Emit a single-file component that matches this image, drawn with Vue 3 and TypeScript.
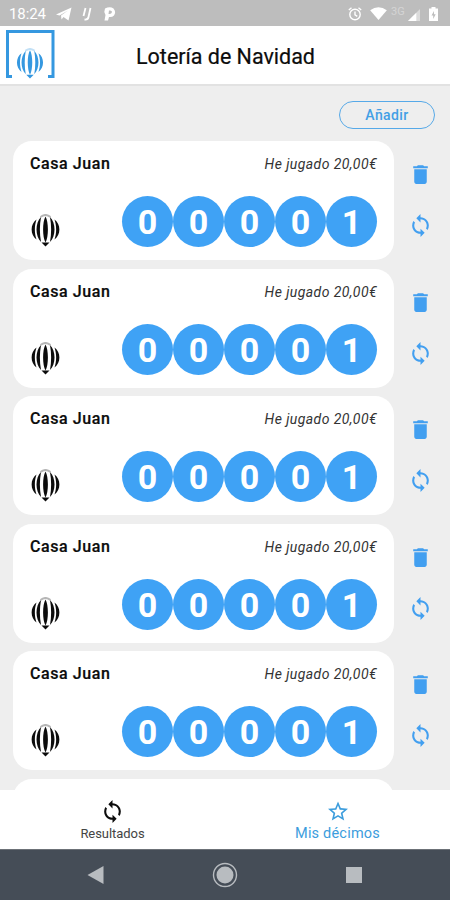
<script setup lang="ts">
interface Ticket {
  id: number
  name: string
  played: string
  digits: string[]
}

const tickets: Ticket[] = Array.from({ length: 5 }, (_, i) => ({
  id: i,
  name: 'Casa Juan',
  played: 'He jugado 20,00€',
  digits: '00001'.split(''),
}))

const loopPath =
  'M12 4V1L8 5l4 4V6c3.31 0 6 2.69 6 6 0 1.01-.25 1.97-.7 2.8l1.46 1.46A7.93 7.93 0 0020 12c0-4.42-3.58-8-8-8zm0 14c-3.31 0-6-2.69-6-6 0-1.01.25-1.97.7-2.8L5.24 7.74A7.93 7.93 0 004 12c0 4.42 3.58 8 8 8v3l4-4-4-4v3z'
const drumPath =
  'M5.500 5.500C-1 10-1 21 5.500 25.500C3.300 19 3.300 12 5.500 5.500ZM10 3C4 9 4 22 10 28C8.500 20 8.500 11 10 3ZM14.500 2.500C11.300 8 11.300 23 14.500 28.500C17.700 23 17.700 8 14.500 2.500ZM19 3C25 9 25 22 19 28C20.500 20 20.500 11 19 3ZM23.500 5.500C30 10 30 21 23.500 25.500C25.700 19 25.700 12 23.500 5.500ZM10.500 28.500H18.500L14.500 32.500Z'
</script>

<template>
  <div class="screen">
    <div class="status">
      <span class="clock">18:24</span>
      <svg class="telegram" viewBox="0 0 16 14"><path d="M0 7.500L15.500.5 12.500 13.500 7.500 10 5.500 12.500 5 8.500 12 3.500 3.500 8.500Z" /></svg>
      <svg class="ij" viewBox="0 0 10 14"><path d="M3.500 1L1.500 9M8.500 1L6.500 10Q6 13 2.500 12.500" /></svg>
      <svg class="pin" viewBox="0 0 12 14"><path fill-rule="evenodd" d="M1 1.500Q6-.8 9.500 1.500Q12.500 5 10 8.500Q8 10.500 5 10L4 13.500H.5L1.500 8L.3 5ZM5 3.500L4.500 7Q7.500 7.500 8 5Q8 3 5 3.500Z" /></svg>
      <span class="spacer"></span>
      <svg class="alarm" viewBox="0 0 14 14"><circle cx="7" cy="7.500" r="5.200" /><path d="M7 4.500V7.800L9.300 9.300M.8 3L3.500.8M13.200 3L10.500.8" /></svg>
      <svg class="wifi" viewBox="0 0 18 14"><path d="M0 3.500Q9-3 18 3.500L9 14Z" /></svg>
      <span class="net">3G</span>
      <svg class="signal" viewBox="0 0 13 13"><path opacity=".45" d="M0 13L13 0V13Z" /><path d="M0 13L9 4V13Z" /></svg>
      <svg class="battery" viewBox="0 0 9 14"><path fill-rule="evenodd" d="M2.500 1.500V0H6.500V1.500H9V14H0V1.500ZM5 4L2.500 8.500H4.200V12L6.700 7.200H5Z" /></svg>
    </div>

    <header class="header">
      <div class="logo">
        <svg class="frame" viewBox="0 0 49 49"><path d="M6 46.500H1.500V1.500H47V46.500H42" /></svg>
        <svg class="logo-drum" viewBox="0 0 29 33"><path :d="drumPath" /><path class="cap" d="M9.500 3Q14.500-1 19.500 3" /></svg>
      </div>
      <h1 class="title">Lotería de Navidad</h1>
    </header>

    <main class="content">
      <div class="toolbar"><button class="add">Añadir</button></div>
      <div class="list">
        <div v-for="t in tickets" :key="t.id" class="row">
          <article class="card">
            <div class="line">
              <span class="name">{{ t.name }}</span>
              <span class="played">{{ t.played }}</span>
            </div>
            <div class="line bottom">
              <svg class="drum" viewBox="0 0 29 33"><path :d="drumPath" /><path class="cap" d="M9.500 3Q14.500-1 19.500 3" /></svg>
              <div class="balls">
                <span v-for="(d, i) in t.digits" :key="i" class="ball">{{ d }}</span>
              </div>
            </div>
          </article>
          <div class="actions">
            <svg viewBox="0 0 24 24"><path d="M6 19c0 1.100.9 2 2 2h8c1.100 0 2-.9 2-2V7H6v12zM19 4h-3.500l-1-1h-5l-1 1H5v2h14V4z" /></svg>
            <svg viewBox="0 0 24 24"><path :d="loopPath" /></svg>
          </div>
        </div>
        <div class="row">
          <article class="card"></article>
        </div>
      </div>
    </main>

    <nav class="tabs">
      <div class="tab">
        <svg viewBox="0 0 24 24"><path :d="loopPath" /></svg>
        <span class="tab-label">Resultados</span>
      </div>
      <div class="tab active">
        <svg viewBox="0 0 24 24"><path d="M22 9.240l-7.190-.62L12 2 9.190 8.630 2 9.240l5.460 4.730L5.820 21 12 17.270 18.180 21l-1.630-7.030L22 9.240zM12 15.400l-3.760 2.270 1-4.280-3.320-2.880 4.380-.38L12 6.100l1.710 4.040 4.380.38-3.320 2.880 1 4.280L12 15.400z" /></svg>
        <span class="tab-label">Mis décimos</span>
      </div>
    </nav>

    <div class="system">
      <svg viewBox="0 0 26 26"><path d="M4.500 13L20.500 4V22Z" /></svg>
      <svg viewBox="0 0 26 26"><circle cx="13" cy="13" r="8.500" /><circle class="ring" cx="13" cy="13" r="11.500" /></svg>
      <svg viewBox="0 0 26 26"><path d="M5 5H21V21H5Z" /></svg>
    </div>
  </div>
</template>

<style>
body {
  margin: 0;
}
</style>

<style scoped>
.screen {
  width: 450px;
  height: 900px;
  display: flex;
  flex-direction: column;
  overflow: hidden;
  background: #eee;
  font-family: Roboto, "Liberation Sans", sans-serif;
  color: #0c0c0c;
}
svg {
  display: block;
  flex: none;
  fill: currentColor;
}
.status {
  flex: none;
  height: 26px;
  box-sizing: border-box;
  padding: 1px 12px 0 9px;
  display: flex;
  align-items: center;
  background: #bdbdbd;
  color: #fff;
}
.clock {
  width: 47px;
  font-size: 15px;
  letter-spacing: -0.1px;
}
.telegram {
  width: 16px;
  height: 14px;
}
.ij {
  width: 10px;
  height: 14px;
  margin-left: 10px;
  fill: none;
  stroke: currentColor;
  stroke-width: 1.8;
}
.pin {
  width: 12px;
  height: 14px;
  margin-left: 12px;
}
.spacer {
  flex: 1;
}
.alarm {
  width: 14px;
  height: 14px;
  fill: none;
  stroke: currentColor;
  stroke-width: 1.4;
}
.wifi {
  width: 17px;
  height: 13px;
  margin-left: 8px;
}
.net {
  width: 16px;
  margin: -5px 0 0 4px;
  font-size: 11px;
  opacity: 0.35;
}
.signal {
  width: 12px;
  height: 12px;
  margin: 2px 0 0 1px;
}
.battery {
  width: 9px;
  height: 14px;
  margin-left: 9px;
}
.header {
  flex: none;
  height: 60px;
  box-sizing: border-box;
  display: grid;
  grid-template-columns: 60px 1fr 60px;
  align-items: center;
  background: #fff;
  border-bottom: 2px solid #e2e2e2;
}
.logo {
  display: grid;
  margin: -1px 0 0 6px;
  width: 49px;
  height: 49px;
  color: #3598e0;
}
.frame,
.logo-drum {
  grid-area: 1 / 1;
}
.frame {
  width: 49px;
  height: 49px;
  fill: none;
  stroke: currentColor;
  stroke-width: 3;
}
.logo-drum {
  width: 28px;
  height: 31px;
  align-self: end;
  margin-left: 10px;
}
.cap {
  fill: none;
  stroke: currentColor;
  stroke-width: 2;
  opacity: 0.3;
}
.title {
  margin: 3px 0 0 1px;
  text-align: center;
  font-size: 21.5px;
  font-weight: 400;
  line-height: 26px;
  letter-spacing: -0.02px;
  -webkit-text-stroke: 0.2px currentColor;
}
.content {
  flex: 1;
  min-height: 0;
  overflow: hidden;
}
.toolbar {
  height: 55px;
  box-sizing: border-box;
  display: flex;
  justify-content: flex-end;
  padding: 15px 15px 0 0;
}
.add {
  width: 96px;
  height: 28px;
  padding: 0;
  border: 1.5px solid #56a9e8;
  border-radius: 14px;
  background: transparent;
  color: #439fe5;
  font: 500 14px/26px Roboto, sans-serif;
  letter-spacing: 0.4px;
}
.list {
  display: flex;
  flex-direction: column;
  gap: 8.5px;
}
.row {
  display: flex;
  padding-left: 13px;
}
.card {
  width: 381px;
  height: 119px;
  box-sizing: border-box;
  padding: 12px 17px 13px;
  border-radius: 19px;
  background: #fff;
  display: flex;
  flex-direction: column;
  justify-content: space-between;
}
.line {
  display: flex;
  justify-content: space-between;
}
.name {
  font-size: 16px;
  font-weight: 500;
  line-height: 22px;
  letter-spacing: 0.58px;
  -webkit-text-stroke: 0.2px currentColor;
}
.played {
  font-size: 14px;
  font-style: italic;
  line-height: 22px;
  letter-spacing: 0.42px;
  color: #333;
}
.bottom {
  align-items: flex-end;
}
.drum {
  width: 29px;
  height: 33px;
  margin-left: 1px;
}
.balls {
  display: flex;
}
.ball {
  width: 51px;
  height: 51px;
  border-radius: 50%;
  background: #3fa2f5;
  color: #fff;
  font-size: 34px;
  font-weight: 700;
  line-height: 52px;
  text-align: center;
}
.actions {
  display: flex;
  flex-direction: column;
  gap: 26px;
  padding: 21px 0 0 14px;
  color: #429ff0;
}
.actions svg {
  width: 25px;
  height: 25px;
}
.tabs {
  flex: none;
  height: 59px;
  display: grid;
  grid-template-columns: 1fr 1fr;
  background: #fff;
}
.tab {
  display: flex;
  flex-direction: column;
  align-items: center;
  padding-top: 9px;
}
.tab svg {
  width: 25px;
  height: 25px;
}
.tab-label {
  font-size: 13px;
  line-height: 20px;
  color: #444;
  letter-spacing: -0.05px;
}
.active,
.active .tab-label {
  color: #3c9ddd;
}
.active .tab-label {
  font-size: 14.5px;
  line-height: 19px;
  letter-spacing: 0.2px;
}
.active svg {
  width: 24px;
  height: 25px;
}
.system {
  flex: none;
  height: 51px;
  box-sizing: border-box;
  padding: 0 83px;
  display: flex;
  align-items: center;
  justify-content: space-between;
  background: #454d57;
  border-top: 1px solid #6c7177;
  color: #b8bcc0;
}
.system svg {
  width: 26px;
  height: 26px;
}
.ring {
  fill: none;
  stroke: currentColor;
  stroke-width: 1.4;
}
</style>
